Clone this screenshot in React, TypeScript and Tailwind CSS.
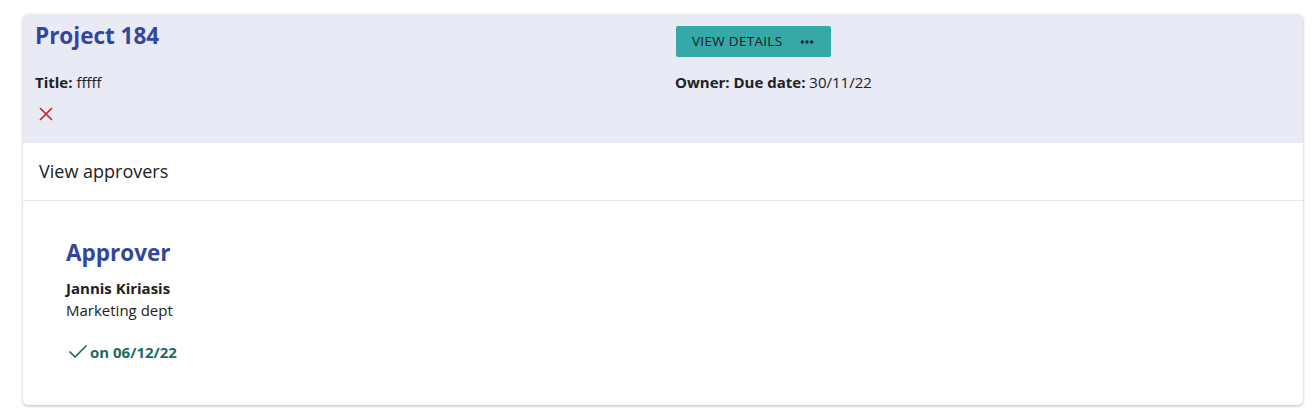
import { Check, MoreHorizontal } from 'lucide-react';

function App() {
  return (
    <div className="min-h-[414px] bg-white pl-[23px] pt-[14px] font-['Open_Sans',sans-serif] text-[#212121]">
      <div className="w-[1280px] h-[391px] rounded-[5px] bg-white shadow-[0_1px_3px_rgba(0,0,0,0.28)] overflow-hidden">
        <div className="bg-[#e8eaf6] px-3 pt-2 h-[129px]">
          <div className="grid grid-cols-[640px_1fr]">
            <div>
              <h2 className="text-[22.5px] leading-[28px] font-bold text-[#32479b]">Project 184</h2>
              <p className="mt-[21px] text-[15px] leading-[22px]">
                <span className="font-bold">Title:</span> fffff
              </p>
              <div className="mt-[14px] pl-1">
                <svg width="14" height="14" viewBox="0 0 14 14" fill="none" stroke="#c62828" strokeWidth="1.7">
                  <path d="M1 1 13 13M13 1 1 13" />
                </svg>
              </div>
            </div>
            <div>
              <button className="mt-[4px] ml-[1px] h-[31px] pl-4 pr-4 rounded-[2px] bg-[#34a9a7] flex items-center gap-[17px] text-[13.5px] tracking-[0.3px] text-[#1a1a1a]">
                VIEW DETAILS
                <MoreHorizontal size={16} strokeWidth={3} />
              </button>
              <p className="mt-[14px] text-[15px] leading-[22px]">
                <span className="font-bold">Owner: Due date:</span> 30/11/22
              </p>
            </div>
          </div>
        </div>
        <div className="h-[58px] flex items-center px-4 border-b border-[#e6e7f4] text-[18px]">
          View approvers
        </div>
        <div className="pl-[43px] pt-[37px]">
          <h3 className="text-[22.5px] leading-[30px] font-bold text-[#32479b]">Approver</h3>
          <p className="mt-[9px] text-[15px] leading-[22px] font-bold">Jannis Kiriasis</p>
          <p className="text-[15px] leading-[22px]">Marketing dept</p>
          <div className="mt-[20px] h-[22px] flex items-center text-[15px] font-bold text-[#1b6b63]">
            <Check size={24} strokeWidth={1.7} />
            on 06/12/22
          </div>
        </div>
      </div>
    </div>
  );
}

export default App;
